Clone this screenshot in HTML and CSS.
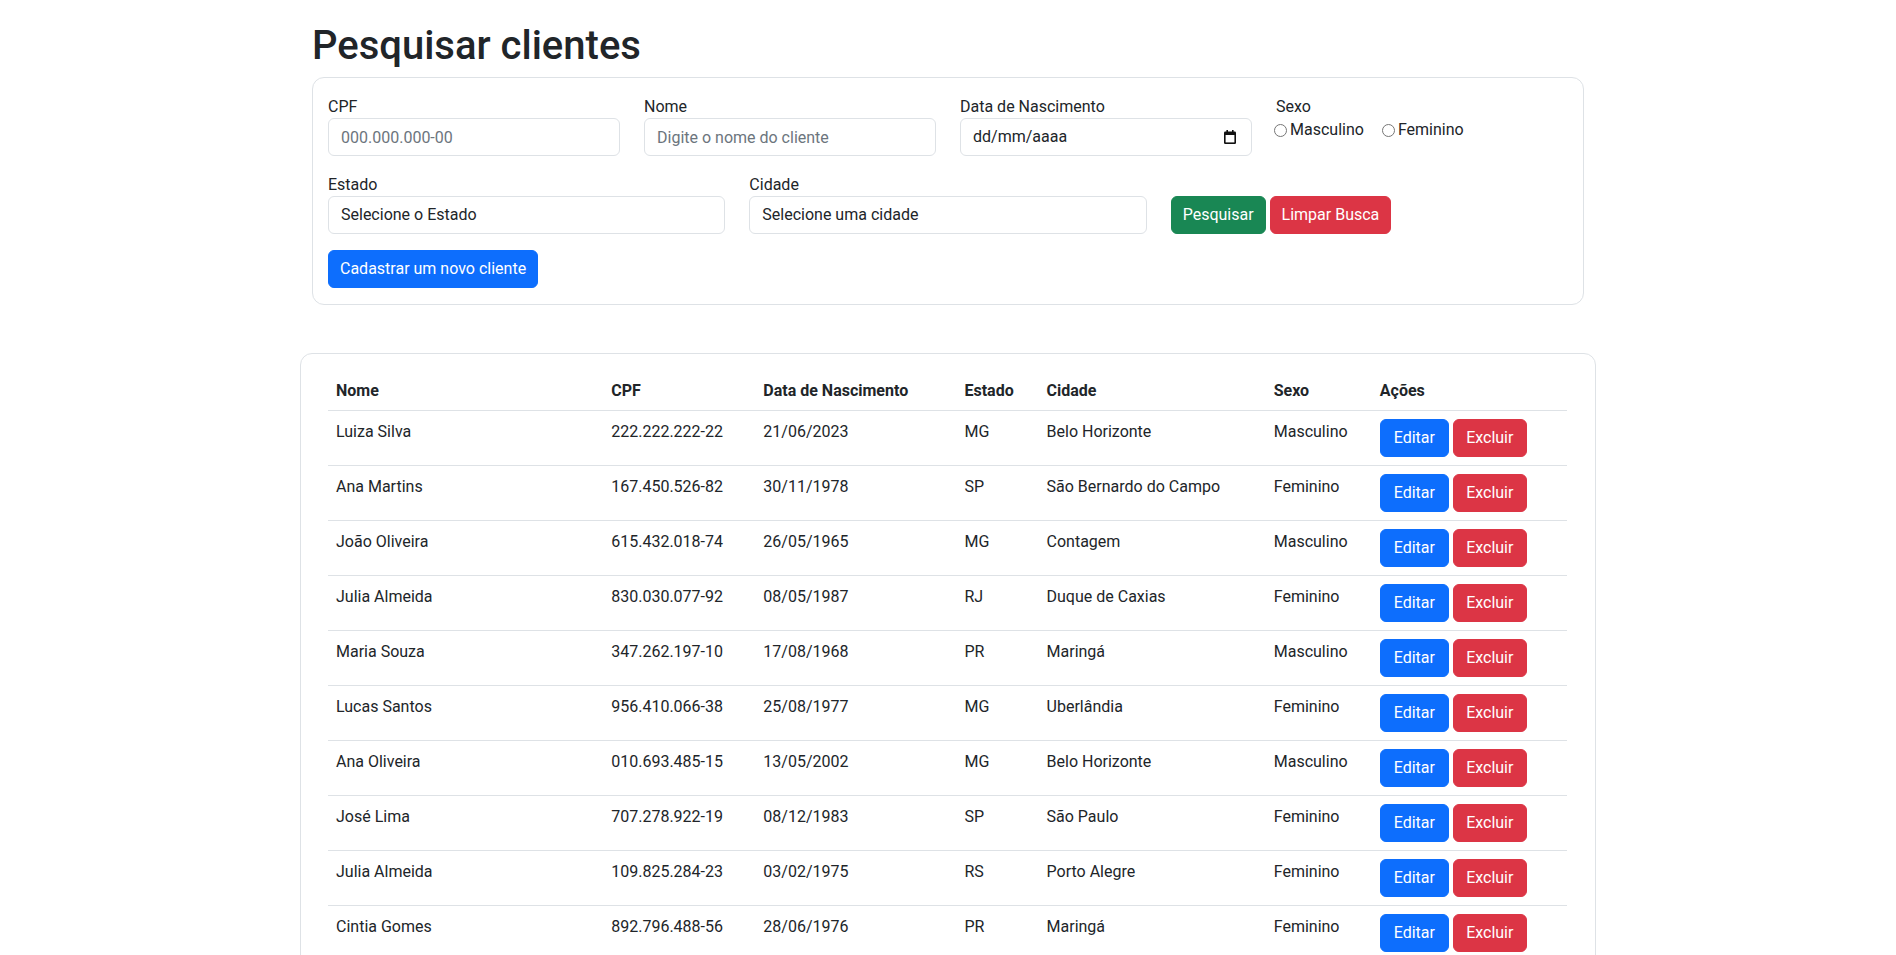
FILE: index.html
```html
<!DOCTYPE html>
<html lang="pt-BR">
<head>
<meta charset="utf-8">
<title>Pesquisar clientes</title>
<link rel="stylesheet" href="styles.css">
</head>
<body>
<div class="page">
  <section class="search">
    <h1 class="title">Pesquisar clientes</h1>
    <form class="card filter">
      <div class="row row-4">
        <div class="group">
          <label class="lbl" for="cpf">CPF</label>
          <input class="ctl" id="cpf" type="text" placeholder="000.000.000-00">
        </div>
        <div class="group">
          <label class="lbl" for="nome">Nome</label>
          <input class="ctl" id="nome" type="text" placeholder="Digite o nome do cliente">
        </div>
        <div class="group">
          <label class="lbl">Data de Nascimento</label>
          <div class="ctl date">
            <span>dd/mm/aaaa</span>
            <svg class="cal" width="12" height="14" viewBox="0 0 12 14" aria-hidden="true">
              <rect x="0" y="1.5" width="12" height="12.5" rx="1.2" fill="#111"/>
              <rect x="1.6" y="5" width="8.8" height="7.4" fill="#fff"/>
              <rect x="2.4" y="0" width="1.6" height="2.5" fill="#111"/>
              <rect x="8" y="0" width="1.6" height="2.5" fill="#111"/>
            </svg>
          </div>
        </div>
        <div class="group">
          <span class="lbl">Sexo</span>
          <div class="radios">
            <label class="radio"><input type="radio" name="sexo" value="M">Masculino</label>
            <label class="radio"><input type="radio" name="sexo" value="F">Feminino</label>
          </div>
        </div>
      </div>
      <div class="row row-3">
        <div class="group">
          <label class="lbl" for="estado">Estado</label>
          <select class="ctl" id="estado"><option>Selecione o Estado</option></select>
        </div>
        <div class="group">
          <label class="lbl" for="cidade">Cidade</label>
          <select class="ctl" id="cidade"><option>Selecione uma cidade</option></select>
        </div>
        <div class="actions">
          <button type="button" class="btn btn-success">Pesquisar</button>
          <button type="button" class="btn btn-danger">Limpar Busca</button>
        </div>
      </div>
      <div>
        <button type="button" class="btn btn-primary">Cadastrar um novo cliente</button>
      </div>
    </form>
  </section>

  <section class="card list">
    <table class="clients">
      <colgroup>
        <col class="c-nome"><col class="c-cpf"><col class="c-data"><col class="c-uf"><col class="c-cidade"><col class="c-sexo"><col class="c-acoes">
      </colgroup>
      <thead>
        <tr><th>Nome</th><th>CPF</th><th>Data de Nascimento</th><th>Estado</th><th>Cidade</th><th>Sexo</th><th>Ações</th></tr>
      </thead>
      <tbody>
        <tr><td>Luiza Silva</td><td>222.222.222-22</td><td>21/06/2023</td><td>MG</td><td>Belo Horizonte</td><td>Masculino</td><td class="acts"><button class="btn btn-primary b-edit">Editar</button><button class="btn btn-danger b-del">Excluir</button></td></tr>
        <tr><td>Ana Martins</td><td>167.450.526-82</td><td>30/11/1978</td><td>SP</td><td>São Bernardo do Campo</td><td>Feminino</td><td class="acts"><button class="btn btn-primary b-edit">Editar</button><button class="btn btn-danger b-del">Excluir</button></td></tr>
        <tr><td>João Oliveira</td><td>615.432.018-74</td><td>26/05/1965</td><td>MG</td><td>Contagem</td><td>Masculino</td><td class="acts"><button class="btn btn-primary b-edit">Editar</button><button class="btn btn-danger b-del">Excluir</button></td></tr>
        <tr><td>Julia Almeida</td><td>830.030.077-92</td><td>08/05/1987</td><td>RJ</td><td>Duque de Caxias</td><td>Feminino</td><td class="acts"><button class="btn btn-primary b-edit">Editar</button><button class="btn btn-danger b-del">Excluir</button></td></tr>
        <tr><td>Maria Souza</td><td>347.262.197-10</td><td>17/08/1968</td><td>PR</td><td>Maringá</td><td>Masculino</td><td class="acts"><button class="btn btn-primary b-edit">Editar</button><button class="btn btn-danger b-del">Excluir</button></td></tr>
        <tr><td>Lucas Santos</td><td>956.410.066-38</td><td>25/08/1977</td><td>MG</td><td>Uberlândia</td><td>Feminino</td><td class="acts"><button class="btn btn-primary b-edit">Editar</button><button class="btn btn-danger b-del">Excluir</button></td></tr>
        <tr><td>Ana Oliveira</td><td>010.693.485-15</td><td>13/05/2002</td><td>MG</td><td>Belo Horizonte</td><td>Masculino</td><td class="acts"><button class="btn btn-primary b-edit">Editar</button><button class="btn btn-danger b-del">Excluir</button></td></tr>
        <tr><td>José Lima</td><td>707.278.922-19</td><td>08/12/1983</td><td>SP</td><td>São Paulo</td><td>Feminino</td><td class="acts"><button class="btn btn-primary b-edit">Editar</button><button class="btn btn-danger b-del">Excluir</button></td></tr>
        <tr><td>Julia Almeida</td><td>109.825.284-23</td><td>03/02/1975</td><td>RS</td><td>Porto Alegre</td><td>Feminino</td><td class="acts"><button class="btn btn-primary b-edit">Editar</button><button class="btn btn-danger b-del">Excluir</button></td></tr>
        <tr><td>Cintia Gomes</td><td>892.796.488-56</td><td>28/06/1976</td><td>PR</td><td>Maringá</td><td>Feminino</td><td class="acts"><button class="btn btn-primary b-edit">Editar</button><button class="btn btn-danger b-del">Excluir</button></td></tr>
      </tbody>
    </table>
  </section>
</div>
</body>
</html>
```

FILE: styles.css
```css
* { box-sizing: border-box; }

body {
  margin: 0;
  font-family: Roboto, "Liberation Sans", Arial, sans-serif;
  font-size: 16px;
  line-height: 1.5;
  color: #212529;
  background: #fff;
}

.page {
  width: 1296px;
  margin: 0 auto;
  padding-top: 22px;
}

.search { padding: 0 12px; }

.title {
  margin: 0 0 7px;
  font-size: 40px;
  font-weight: 500;
  line-height: 1.2;
}

.card {
  background: #fff;
  border: 1px solid #dee2e6;
  border-radius: 12px;
}

.filter {
  display: flex;
  flex-direction: column;
  gap: 16px;
  margin: 0;
  padding: 16px 15px;
}

.row { display: grid; column-gap: 24px; }
.row-4 { grid-template-columns: repeat(4, 1fr); }
.row-3 { grid-template-columns: repeat(3, 1fr); }

.lbl { display: block; padding-top: 1px; margin-bottom: -1px; }

.ctl {
  display: block;
  width: 100%;
  height: 38px;
  margin: 0;
  padding: 6px 12px;
  font: inherit;
  line-height: 24px;
  color: #212529;
  background: #fff;
  border: 1px solid #dee2e6;
  border-radius: 6px;
  appearance: none;
  -webkit-appearance: none;
}
.ctl::placeholder { color: #6c757d; opacity: 1; }

.date {
  display: flex;
  align-items: center;
  justify-content: space-between;
  padding-right: 15px;
}
.cal { display: block; }

.radios { display: flex; gap: 18px; margin-left: -2px; }
.radio { display: inline-flex; align-items: center; }
.radio input {
  width: 13px;
  height: 13px;
  margin: 1px 3px 0 0;
}

.actions {
  display: flex;
  align-items: flex-end;
  gap: 4px;
}

.btn {
  display: inline-block;
  height: 38px;
  padding: 6px 11px;
  font: inherit;
  line-height: 24px;
  color: #fff;
  border: 1px solid transparent;
  border-radius: 6px;
  cursor: pointer;
}
.btn-primary { background: #0d6efd; border-color: #0d6efd; }
.btn-success { background: #198754; border-color: #198754; }
.btn-danger { background: #dc3545; border-color: #dc3545; }

.list {
  margin-top: 48px;
  padding: 16px 28px 16px 27px;
}

.clients {
  width: 100%;
  border-collapse: collapse;
  table-layout: fixed;
}
.c-nome { width: 275px; }
.c-cpf { width: 152px; }
.c-data { width: 201px; }
.c-uf { width: 82px; }
.c-cidade { width: 227px; }
.c-sexo { width: 106px; }
.c-acoes { width: 195px; }

.clients th,
.clients td {
  padding: 9px 8px 7px;
  text-align: left;
  vertical-align: top;
  border-bottom: 1px solid #dee2e6;
}
.clients th { font-weight: 700; }
.clients td.acts { padding: 8px; white-space: nowrap; }

.acts .btn + .btn { margin-left: 4px; }
.b-edit { width: 69px; }
.b-del { width: 74px; }
```
